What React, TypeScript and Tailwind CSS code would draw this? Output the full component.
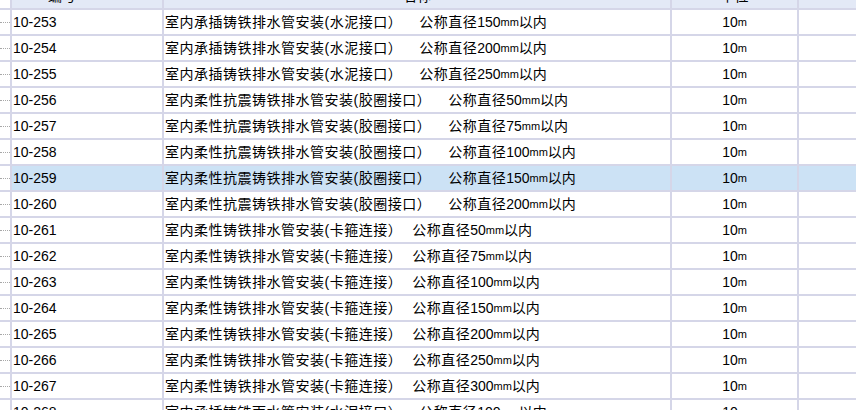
const rows = [
  { code: "10-253", name: "室内承插铸铁排水管安装(水泥接口）", gap: true, dia: "150" },
  { code: "10-254", name: "室内承插铸铁排水管安装(水泥接口）", gap: true, dia: "200" },
  { code: "10-255", name: "室内承插铸铁排水管安装(水泥接口）", gap: true, dia: "250" },
  { code: "10-256", name: "室内柔性抗震铸铁排水管安装(胶圈接口）", gap: true, dia: "50" },
  { code: "10-257", name: "室内柔性抗震铸铁排水管安装(胶圈接口）", gap: true, dia: "75" },
  { code: "10-258", name: "室内柔性抗震铸铁排水管安装(胶圈接口）", gap: true, dia: "100" },
  { code: "10-259", name: "室内柔性抗震铸铁排水管安装(胶圈接口）", gap: true, dia: "150" },
  { code: "10-260", name: "室内柔性抗震铸铁排水管安装(胶圈接口）", gap: true, dia: "200" },
  { code: "10-261", name: "室内柔性铸铁排水管安装(卡箍连接）", gap: false, dia: "50" },
  { code: "10-262", name: "室内柔性铸铁排水管安装(卡箍连接）", gap: false, dia: "75" },
  { code: "10-263", name: "室内柔性铸铁排水管安装(卡箍连接）", gap: false, dia: "100" },
  { code: "10-264", name: "室内柔性铸铁排水管安装(卡箍连接）", gap: false, dia: "150" },
  { code: "10-265", name: "室内柔性铸铁排水管安装(卡箍连接）", gap: false, dia: "200" },
  { code: "10-266", name: "室内柔性铸铁排水管安装(卡箍连接）", gap: false, dia: "250" },
  { code: "10-267", name: "室内柔性铸铁排水管安装(卡箍连接）", gap: false, dia: "300" },
  { code: "10-268", name: "室内承插铸铁雨水管安装(水泥接口）", gap: true, dia: "100" },
];

const SELECTED = "10-259";

function Row({ r }: { r: (typeof rows)[number] }) {
  const sel = r.code === SELECTED;
  const bg = sel ? "bg-[#cce2f5]" : "bg-white";
  return (
    <div className="grid grid-cols-[10px_152px_508px_127px_1fr] h-[26px] border-b-2 border-[#d5d6e8]">
      <div className="flex items-center bg-white">
        <div className="w-full border-t border-dotted border-[#a8a8a8]" />
      </div>
      <div className={`flex items-center pl-[1px] border-l-2 border-[#d5d6e8] ${bg}`}>{r.code}</div>
      <div className={`flex items-center pl-[1px] border-l-2 border-[#d5d6e8] whitespace-pre ${bg}`}>
        <span className="tracking-[0.5px]">{r.name}</span>
        <span className={r.gap ? "w-[17px]" : "w-[10px]"} />
        <span className="tracking-[0.5px]">公称直径</span>
        {r.dia}
        <span className="text-[11px]">mm</span>以内
      </div>
      <div className={`flex items-center justify-center border-l-2 border-[#d5d6e8] ${bg}`}>
        10<span className="text-[11px]">m</span>
      </div>
      <div className={`border-l-2 border-[#d5d6e8] ${bg}`} />
    </div>
  );
}

export default function App() {
  return (
    <div className="w-[856px] h-[410px] overflow-hidden bg-white text-black text-[14px] font-['Liberation_Sans','Noto_Sans_CJK_SC',sans-serif]">
      <div className="-mt-[16px]">
        {/* header */}
        <div className="grid grid-cols-[10px_152px_508px_127px_1fr] h-[26px] border-b-2 border-[#d5d6e8] bg-[#e3e9f6]">
          <div className="bg-white" />
          <div className="flex items-center pl-[36px] border-l-2 border-[#d5d6e8]">编号</div>
          <div className="flex items-center justify-center border-l-2 border-[#d5d6e8]">名称</div>
          <div className="flex items-center justify-center border-l-2 border-[#d5d6e8]">单位</div>
          <div className="border-l-2 border-[#d5d6e8]" />
        </div>
        {rows.map((r) => (
          <Row key={r.code} r={r} />
        ))}
      </div>
    </div>
  );
}
